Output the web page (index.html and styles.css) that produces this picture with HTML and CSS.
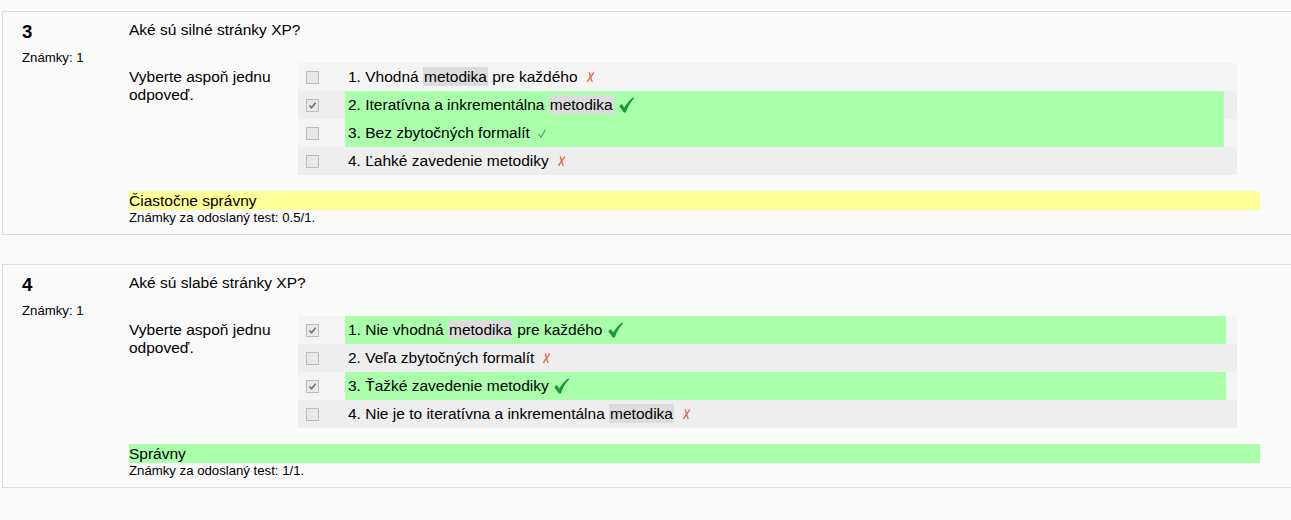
FILE: index.html
```html
<!DOCTYPE html>
<html lang="sk">
<head>
<meta charset="utf-8">
<title>Test</title>
<link rel="stylesheet" href="styles.css">
</head>
<body>
<div class="que que-first">
  <div class="info">
    <div class="no">3</div>
    <div class="grade">Známky: 1</div>
  </div>
  <div class="content">
    <div class="qtext">Aké sú silné stránky XP?</div>
    <div class="ablock">
      <div class="prompt">Vyberte aspoň jednu odpoveď.</div>
      <div class="answer">
        <div class="row r0">
          <div class="c0"><span class="cb"></span></div>
          <div class="c1"><span class="label">1. Vhodná <span class="hl">metodika</span> pre každého</span><svg class="ico-x" width="7" height="10" viewBox="0 0 7 10"><path d="M2.4 1 C3 3.6 3.6 6.4 5 9.3" /><path d="M6.6 0.8 C4.8 3.4 2.8 6.2 0.7 9.3" /></svg></div>
          <div class="c2"></div>
        </div>
        <div class="row r1">
          <div class="c0"><span class="cb checked"><svg width="9" height="9" viewBox="0 0 9 9"><path d="M1.5 4.5 L3.6 6.8 L7.6 1.8" /></svg></span></div>
          <div class="c1 correct"><span class="label">2. Iteratívna a inkrementálna <span class="hl">metodika</span></span><svg class="ico-tick" width="15" height="16" viewBox="0 0 15 16"><path d="M0.2 9 L2.8 7 L5.3 10.6 C7.8 6.4 10.8 2.8 14.5 0.3 L15 1.6 C11.6 5 8.8 9.8 6.8 15.6 L4.8 15.6 Z" /></svg></div>
          <div class="c2"></div>
        </div>
        <div class="row r0">
          <div class="c0"><span class="cb"></span></div>
          <div class="c1 correct"><span class="label">3. Bez zbytočných formalít</span><svg class="ico-tick-s" width="8" height="9" viewBox="0 0 8 9"><path d="M0.8 5 L2.9 8.2 L7.4 0.8" /></svg></div>
          <div class="c2"></div>
        </div>
        <div class="row r1">
          <div class="c0"><span class="cb"></span></div>
          <div class="c1"><span class="label">4. Ľahké zavedenie metodiky</span><svg class="ico-x" width="7" height="10" viewBox="0 0 7 10"><path d="M2.4 1 C3 3.6 3.6 6.4 5 9.3" /><path d="M6.6 0.8 C4.8 3.4 2.8 6.2 0.7 9.3" /></svg></div>
          <div class="c2"></div>
        </div>
      </div>
    </div>
    <div class="feedback partial">Čiastočne správny</div>
    <div class="grading">Známky za odoslaný test: 0.5/1.</div>
  </div>
</div>

<div class="que que-second">
  <div class="info">
    <div class="no">4</div>
    <div class="grade">Známky: 1</div>
  </div>
  <div class="content">
    <div class="qtext">Aké sú slabé stránky XP?</div>
    <div class="ablock">
      <div class="prompt">Vyberte aspoň jednu odpoveď.</div>
      <div class="answer">
        <div class="row r0">
          <div class="c0"><span class="cb checked"><svg width="9" height="9" viewBox="0 0 9 9"><path d="M1.5 4.5 L3.6 6.8 L7.6 1.8" /></svg></span></div>
          <div class="c1 correct"><span class="label">1. Nie vhodná <span class="hl">metodika</span> pre každého</span><svg class="ico-tick" width="15" height="16" viewBox="0 0 15 16"><path d="M0.2 9 L2.8 7 L5.3 10.6 C7.8 6.4 10.8 2.8 14.5 0.3 L15 1.6 C11.6 5 8.8 9.8 6.8 15.6 L4.8 15.6 Z" /></svg></div>
          <div class="c2 narrow"></div>
        </div>
        <div class="row r1">
          <div class="c0"><span class="cb"></span></div>
          <div class="c1"><span class="label">2. Veľa zbytočných formalít</span><svg class="ico-x" width="7" height="10" viewBox="0 0 7 10"><path d="M2.4 1 C3 3.6 3.6 6.4 5 9.3" /><path d="M6.6 0.8 C4.8 3.4 2.8 6.2 0.7 9.3" /></svg></div>
          <div class="c2 narrow"></div>
        </div>
        <div class="row r0">
          <div class="c0"><span class="cb checked"><svg width="9" height="9" viewBox="0 0 9 9"><path d="M1.5 4.5 L3.6 6.8 L7.6 1.8" /></svg></span></div>
          <div class="c1 correct"><span class="label">3. Ťažké zavedenie metodiky</span><svg class="ico-tick" width="15" height="16" viewBox="0 0 15 16"><path d="M0.2 9 L2.8 7 L5.3 10.6 C7.8 6.4 10.8 2.8 14.5 0.3 L15 1.6 C11.6 5 8.8 9.8 6.8 15.6 L4.8 15.6 Z" /></svg></div>
          <div class="c2 narrow"></div>
        </div>
        <div class="row r1">
          <div class="c0"><span class="cb"></span></div>
          <div class="c1"><span class="label">4. Nie je to iteratívna a inkrementálna <span class="hl">metodika</span></span><svg class="ico-x" width="7" height="10" viewBox="0 0 7 10"><path d="M2.4 1 C3 3.6 3.6 6.4 5 9.3" /><path d="M6.6 0.8 C4.8 3.4 2.8 6.2 0.7 9.3" /></svg></div>
          <div class="c2 narrow"></div>
        </div>
      </div>
    </div>
    <div class="feedback right">Správny</div>
    <div class="grading">Známky za odoslaný test: 1/1.</div>
  </div>
</div>
</body>
</html>
```

FILE: styles.css
```css
html, body {
  margin: 0;
  padding: 0;
  background: #fafafa;
}

body {
  font-family: "Liberation Sans", Arial, sans-serif;
  color: #000;
  font-size: 15.5px;
}

.que {
  display: flex;
  margin-left: 2px;
  border: 1px solid #dcdcdc;
  border-right: none;
}

.que-first {
  margin-top: 11px;
}

.que-second {
  margin-top: 29px;
}

.info {
  width: 126px;
  flex: none;
  box-sizing: border-box;
  padding: 9px 0 0 19px;
}

.no {
  font-size: 18.7px;
  font-weight: bold;
  line-height: 22px;
}

.grade {
  margin-top: 7px;
  font-size: 13.2px;
  line-height: 16px;
}

.content {
  flex: 1;
  padding: 9px 31px 8px 0;
}

.qtext {
  line-height: 18px;
}

.ablock {
  display: flex;
  margin-top: 24px;
  margin-right: 23px;
  align-items: flex-start;
}

.prompt {
  width: 169px;
  flex: none;
  padding-top: 5px;
  line-height: 18px;
}

.answer {
  flex: 1;
  display: flex;
  flex-direction: column;
}

.row {
  display: flex;
  height: 28px;
}

.r0 {
  background: #f4f4f4;
}

.r1 {
  background: #eeeeee;
}

.c0 {
  width: 47px;
  flex: none;
  box-sizing: border-box;
  padding-left: 8px;
  display: flex;
  align-items: center;
}

.cb {
  width: 11px;
  height: 11px;
  border: 1px solid #bcbcbc;
  background: #e8e8e8;
  display: flex;
  align-items: center;
  justify-content: center;
}

.cb svg path {
  fill: none;
  stroke: #707070;
  stroke-width: 1.6;
}

.c1 {
  flex: 1;
  display: flex;
  align-items: center;
  padding-left: 3px;
  line-height: 18px;
  white-space: nowrap;
}

.c1.correct {
  background: #aaffaa;
}

.c2 {
  width: 13px;
  flex: none;
}

.c2.narrow {
  width: 11px;
}

.hl {
  background: #dcdcdc;
  padding: 1px 1px;
}

.ico-x {
  margin-left: 9px;
  flex: none;
}

.ico-x path {
  fill: none;
  stroke: #f2623c;
  stroke-width: 1.4;
  stroke-linecap: round;
}

.ico-tick {
  margin-left: 5px;
  flex: none;
}

.ico-tick path {
  fill: #1a9837;
}

.ico-tick-s {
  margin-left: 8px;
  flex: none;
}

.ico-tick-s path {
  fill: none;
  stroke: #3aa84a;
  stroke-width: 1.1;
}

.feedback {
  margin-top: 16px;
  line-height: 19px;
}

.feedback.partial {
  background: #ffff99;
}

.feedback.right {
  background: #aaffaa;
}

.grading {
  font-size: 13.2px;
  line-height: 16px;
}
```
